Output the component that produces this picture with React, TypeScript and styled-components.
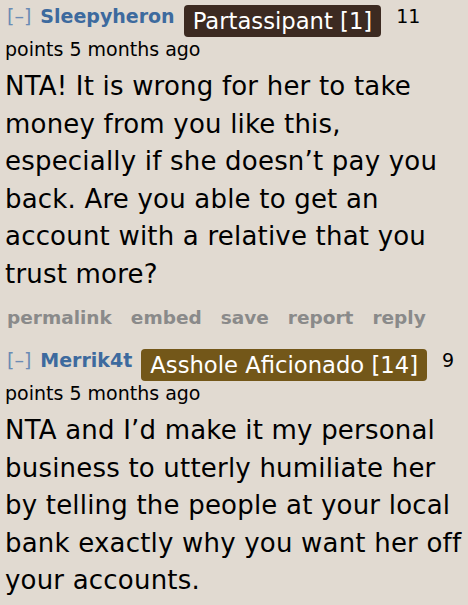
import React from "react";
import styled, { createGlobalStyle } from "styled-components";

const Global = createGlobalStyle`
  html, body { margin: 0; padding: 0; background: #e1dad1; }
  body { font-family: "DejaVu Sans", Verdana, sans-serif; color: #000; }
`;

const Page = styled.div`
  padding: 4px 0 0 5px;
  background: #e1dad1;
  min-height: 605px;
  box-sizing: border-box;
`;

const Comment = styled.div`
  margin-bottom: 20px;
`;

const Tagline = styled.div`
  font-size: 18px;
  line-height: 24px;
`;

const Toggle = styled.span`
  color: #6b8bb4;
  font-size: 19px;
  margin-left: 2px;
  margin-right: 9px;
`;

const Author = styled.span`
  color: #3d6a9e;
  font-weight: bold;
  font-size: 19px;
  margin-right: 9px;
`;

const Flair = styled.span<{ $bg: string }>`
  display: inline-block;
  background: ${(p) => p.$bg};
  color: #fff;
  font-size: 22.7px;
  line-height: 32px;
  height: 32px;
  padding: 0 9px;
  border-radius: 4px;
  margin-right: 15px;
  vertical-align: -6px;
`;

const Points = styled.span`
  font-size: 19px;
`;

const Body = styled.div`
  font-size: 26px;
  line-height: 37.5px;
  letter-spacing: 0.2px;
  margin-top: 6px;
`;

const Buttons = styled.ul`
  list-style: none;
  margin: 14px 0 0 2px;
  padding: 0;
  display: flex;
  gap: 19px;
  font-size: 18.5px;
  font-weight: bold;
  color: #8a8a8a;
`;

type C = {
  user: string;
  flair: string;
  bg: string;
  score: string;
  body: string;
  buttons: boolean;
};

const comments: C[] = [
  {
    user: "Sleepyheron",
    flair: "Partassipant [1]",
    bg: "#3c2a21",
    score: "11",
    body:
      "NTA! It is wrong for her to take money from you like this, especially if she doesn\u2019t pay you back. Are you able to get an account with a relative that you trust more?",
    buttons: true,
  },
  {
    user: "Merrik4t",
    flair: "Asshole Aficionado [14]",
    bg: "#735719",
    score: "9",
    body:
      "NTA and I\u2019d make it my personal business to utterly humiliate her by telling the people at your local bank exactly why you want her off your accounts.",
    buttons: false,
  },
];

export default function App() {
  return (
    <Page>
      <Global />
      {comments.map((c) => (
        <Comment key={c.user}>
          <Tagline>
            <Toggle>[–]</Toggle>
            <Author>{c.user}</Author>
            <Flair $bg={c.bg}>{c.flair}</Flair>
            <Points>{c.score} points 5 months ago</Points>
          </Tagline>
          <Body>{c.body}</Body>
          {c.buttons && (
            <Buttons>
              <li>permalink</li>
              <li>embed</li>
              <li>save</li>
              <li>report</li>
              <li>reply</li>
            </Buttons>
          )}
        </Comment>
      ))}
    </Page>
  );
}
